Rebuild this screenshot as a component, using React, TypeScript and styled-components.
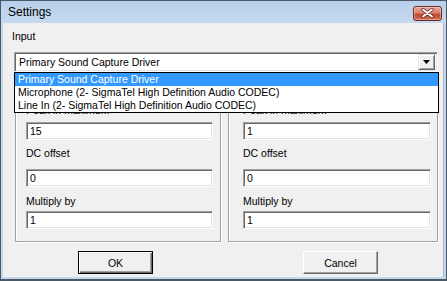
import React from 'react';
import styled, { createGlobalStyle } from 'styled-components';

const GlobalStyle = createGlobalStyle`
  html, body {
    margin: 0;
    padding: 0;
    background: #fff;
  }
  body {
    font-family: "Liberation Sans", Arial, sans-serif;
    font-size: 10.5px;
  }
`;

const Window = styled.div`
  width: 447px;
  height: 281px;
  box-sizing: border-box;
  border: 1px solid #4a5866;
  border-bottom-width: 2px;
  background: #c3d7ed;
  display: flex;
  flex-direction: column;
  overflow: hidden;
`;

const TitleBar = styled.div`
  height: 22px;
  flex: none;
  display: flex;
  align-items: center;
  justify-content: space-between;
  padding: 0 4px 0 7px;
  background: linear-gradient(#b8d0ea, #c5d9ef);
  font-family: "Liberation Sans", Arial, sans-serif;
  font-size: 12px;
  color: #000;
`;

const CloseButton = styled.div`
  width: 27px;
  height: 13px;
  margin-top: 2px;
  border: 1px solid #6e2a22;
  border-radius: 3px;
  display: flex;
  align-items: center;
  justify-content: center;
  background: linear-gradient(#e9a89b 0%, #d9826f 45%, #c34a33 55%, #cf6a53 100%);
  box-shadow: inset 0 0 0 1px rgba(255, 255, 255, 0.35);
`;

const Client = styled.div`
  position: relative;
  flex: 1;
  margin: 0 2px 2px 2px;
  background: #f0f0f0;
  border-right: 1px solid #a9b5c2;
  display: flex;
  flex-direction: column;
`;

const Label = styled.div<{ $top?: number }>`
  height: 13px;
  line-height: 13px;
  margin-top: ${(p) => p.$top ?? 0}px;
  color: #000;
  white-space: nowrap;
`;

const InputLabel = styled(Label)`
  margin-left: 9px;
`;

const Sunken = `
  box-sizing: border-box;
  border-style: solid;
  border-width: 1px;
  border-color: #a0a0a0 #fff #fff #a0a0a0;
  box-shadow: inset 1px 1px 0 #696969, inset -1px -1px 0 #e3e3e3;
  background: #fff;
`;

const Combo = styled.div`
  ${Sunken}
  margin: 9px 0 0 11px;
  width: 424px;
  height: 20px;
  display: flex;
  align-items: center;
  padding: 0 2px 0 4px;
  justify-content: space-between;
`;

const DropButton = styled.div`
  width: 17px;
  height: 16px;
  box-sizing: border-box;
  background: #f0f0f0;
  border-style: solid;
  border-width: 1px;
  border-color: #e3e3e3 #696969 #696969 #e3e3e3;
  box-shadow: inset 1px 1px 0 #fff, inset -1px -1px 0 #a0a0a0;
  display: flex;
  align-items: center;
  justify-content: center;
`;

const DropList = styled.ul`
  position: absolute;
  left: 11px;
  top: 49px;
  width: 425px;
  margin: 0;
  padding: 0;
  list-style: none;
  box-sizing: border-box;
  border: 1px solid #000;
  background: #fff;
  z-index: 2;
`;

const Option = styled.li<{ $selected?: boolean }>`
  height: 13px;
  line-height: 13px;
  padding-left: 3px;
  white-space: nowrap;
  background: ${(p) => (p.$selected ? '#3399ff' : '#fff')};
  color: ${(p) => (p.$selected ? '#fff' : '#000')};
`;

const Groups = styled.div`
  display: flex;
  gap: 7px;
  margin: 8px 0 0 12px;
`;

const Group = styled.div<{ $width: number; $padLeft: number; $padRight: number }>`
  width: ${(p) => p.$width}px;
  height: 162px;
  box-sizing: border-box;
  border: 1px solid #a0a0a0;
  box-shadow: 1px 1px 0 #fff, inset 1px 1px 0 #fff;
  padding: 23px ${(p) => p.$padRight}px 0 ${(p) => p.$padLeft}px;
  display: flex;
  flex-direction: column;
`;

const TextBox = styled.div<{ $top: number }>`
  ${Sunken}
  height: 18px;
  margin-top: ${(p) => p.$top}px;
  line-height: 16px;
  padding-left: 3px;
`;

const Buttons = styled.div`
  display: flex;
  gap: 150px;
  margin: 9px 0 0 75px;
`;

const Button = styled.div<{ $default?: boolean }>`
  width: 75px;
  height: 23px;
  box-sizing: border-box;
  display: flex;
  align-items: center;
  justify-content: center;
  background: #f0f0f0;
  border-style: solid;
  border-width: 1px;
  border-color: ${(p) => (p.$default ? '#000' : '#fff #696969 #696969 #fff')};
  box-shadow: ${(p) =>
    p.$default
      ? 'inset 1px 1px 0 #fff, inset -1px -1px 0 #696969, inset -2px -2px 0 #a0a0a0'
      : 'inset -1px -1px 0 #a0a0a0'};
`;

interface ChannelProps {
  peak: string;
  width: number;
  padLeft: number;
  padRight: number;
}

const Channel: React.FC<ChannelProps> = ({ peak, width, padLeft, padRight }) => (
  <Group $width={width} $padLeft={padLeft} $padRight={padRight}>
    <Label>Peak in maximum</Label>
    <TextBox $top={5}>{peak}</TextBox>
    <Label $top={7}>DC offset</Label>
    <TextBox $top={9}>0</TextBox>
    <Label $top={8}>Multiply by</Label>
    <TextBox $top={3}>1</TextBox>
  </Group>
);

const options = [
  'Primary Sound Capture Driver',
  'Microphone (2- SigmaTel High Definition Audio CODEC)',
  'Line In (2- SigmaTel High Definition Audio CODEC)',
];

const App: React.FC = () => (
  <>
    <GlobalStyle />
    <Window>
      <TitleBar>
        <span>Settings</span>
        <CloseButton>
          <svg width="13" height="10" viewBox="0 0 13 10">
            <path d="M2 1.5 L11 8.5 M11 1.5 L2 8.5" stroke="#5a1e16" strokeWidth="3.4" strokeLinecap="round" />
            <path d="M2 1.5 L11 8.5 M11 1.5 L2 8.5" stroke="#fff" strokeWidth="2" strokeLinecap="round" />
          </svg>
        </CloseButton>
      </TitleBar>
      <Client>
        <InputLabel $top={7}>Input</InputLabel>
        <Combo>
          <span>Primary Sound Capture Driver</span>
          <DropButton>
            <svg width="7" height="4" viewBox="0 0 7 4">
              <path d="M0 0 H7 L3.5 4 Z" fill="#000" />
            </svg>
          </DropButton>
        </Combo>
        <DropList>
          {options.map((o, i) => (
            <Option key={o} $selected={i === 0}>
              {o}
            </Option>
          ))}
        </DropList>
        <Groups>
          <Channel peak="15" width={206} padLeft={10} padRight={7} />
          <Channel peak="1" width={210} padLeft={14} padRight={6} />
        </Groups>
        <Buttons>
          <Button $default>OK</Button>
          <Button>Cancel</Button>
        </Buttons>
      </Client>
    </Window>
  </>
);

export default App;
